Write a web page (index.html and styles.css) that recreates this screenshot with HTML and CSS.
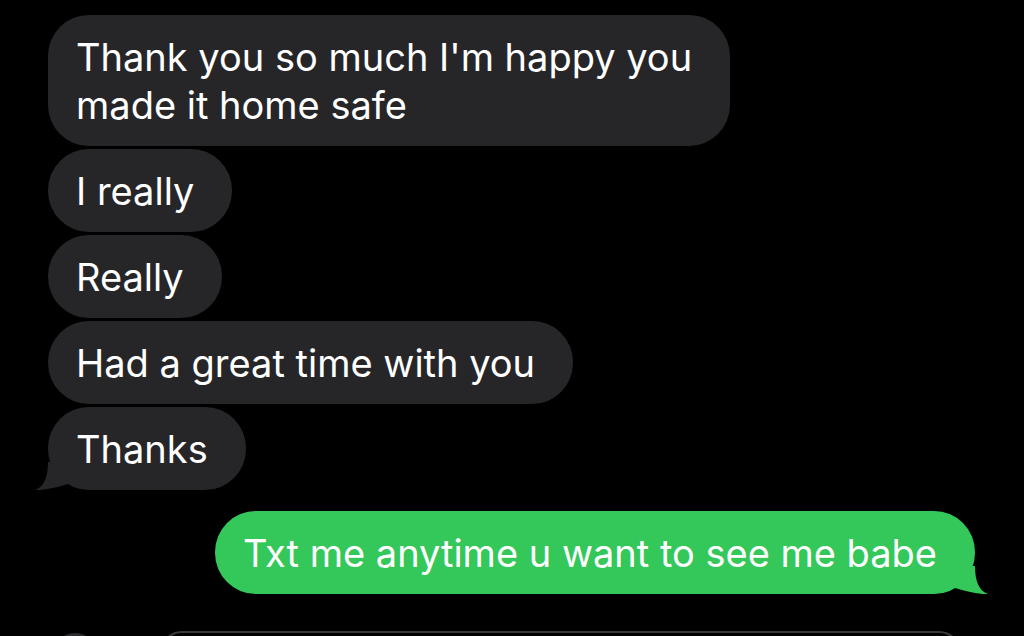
FILE: index.html
```html
<!DOCTYPE html>
<html lang="en">
<head>
  <meta charset="UTF-8">
  <title>Messages</title>
  <link rel="stylesheet" href="styles.css">
</head>
<body>

<div class="thread">
  <div class="bubble received">Thank you so much I'm happy you<br>made it home safe</div>
  <div class="bubble received">I really</div>
  <div class="bubble received">Really</div>
  <div class="bubble received">Had a great time with you</div>
  <div class="bubble received">Thanks
    <svg class="tail" viewBox="0 0 34 28" width="34" height="28"><path d="M13 0 C13 15 9 25 0 28 C9 28.5 20 26 33 22 L34 0 Z"/></svg>
  </div>

  <div class="bubble sent">Txt me anytime u want to see me babe
    <svg class="tail" viewBox="0 0 34 28" width="34" height="28"><path d="M13 0 C13 15 9 25 0 28 C9 28.5 20 26 33 22 L34 0 Z"/></svg>
  </div>
</div>

<div class="composer">
  <div class="plus"></div>
  <div class="input"></div>
</div>

</body>
</html>
```

FILE: styles.css
```css
body {
  margin: 0;
  background: #000;
  font-family: Inter, "Open Sans", sans-serif;
  overflow: hidden;
}
.thread {
  display: flex;
  flex-direction: column;
  align-items: flex-start;
  gap: 3px;
  padding: 15px 49px 0 48px;
}
.bubble {
  position: relative;
  padding: 17.5px 38px 17.5px 28px;
  font-size: 38px;
  line-height: 48px;
  color: #fff;
  border-radius: 41px;
}
.received {
  background: #262629;
}
.sent {
  align-self: flex-end;
  margin-top: 18px;
  background: #34c759;
}
.tail {
  position: absolute;
  bottom: 0;
  display: block;
}
.received .tail {
  left: -13px;
  fill: #262629;
}
.sent .tail {
  right: -13px;
  fill: #34c759;
  transform: scaleX(-1);
}
.composer {
  display: flex;
  gap: 62px;
  padding: 37px 63px 0 52px;
}
.plus {
  width: 46px;
  height: 46px;
  border-radius: 50%;
  background: #2c2c2e;
  flex-shrink: 0;
  margin-top: 2px;
}
.input {
  flex: 1;
  height: 46px;
  border: 2px solid #3a3a3c;
  border-radius: 22px;
}
```
